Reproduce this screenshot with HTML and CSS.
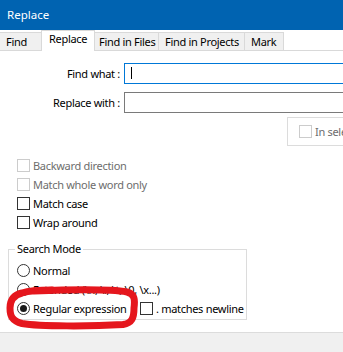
FILE: index.html
```html
<!DOCTYPE html>
<html lang="en">
<head>
  <meta charset="UTF-8" />
  <meta name="viewport" content="width=device-width, initial-scale=1.0"/>
  <title>Replace</title>
  <link rel="stylesheet" href="styles.css">
</head>
<body>

<div class="titlebar">Replace</div>

<div class="tabs">
  <div class="tab tab-find">Find</div>
  <div class="tab tab-replace active">Replace</div>
  <div class="tab tab-files">Find in Files</div>
  <div class="tab tab-projects">Find in Projects</div>
  <div class="tab tab-mark">Mark</div>
</div>

<div class="content">
  <div class="field-row first">
    <label>Find what :</label>
    <div class="field focused"><span class="caret"></span></div>
  </div>
  <div class="field-row">
    <label>Replace with :</label>
    <div class="field"></div>
  </div>

  <div class="selection-box">
    <div class="check disabled"><span class="box"></span>In selection</div>
  </div>

  <div class="options">
    <div class="check disabled"><span class="box"></span>Backward direction</div>
    <div class="check disabled"><span class="box"></span>Match whole word only</div>
    <div class="check"><span class="box"></span>Match case</div>
    <div class="check"><span class="box"></span>Wrap around</div>
  </div>

  <fieldset class="search-mode">
    <legend>Search Mode</legend>
    <div class="radios">
      <div class="radio"><span class="dot"></span>Normal</div>
      <div class="radio"><span class="dot"></span>Extended (\n, \r, \t, \0, \x...)</div>
      <div class="radio-row">
        <div class="radio checked"><span class="dot"></span>Regular expression</div>
        <div class="check"><span class="box"></span>. matches newline</div>
      </div>
    </div>
  </fieldset>
</div>

<div class="footer"></div>

<!-- red marker scribble drawn over the dialog -->
<svg class="scribble" width="343" height="352" viewBox="0 0 343 352">
  <path d="M 34 291 C 60 290, 110 289, 127 292 C 135 294, 135 300, 134 308 C 134 318, 132 323, 123 324.5 C 90 326.5, 40 326.5, 22 323.5 C 12 321, 10 316, 10 308 C 10 300, 14 295, 22 293 C 28 291, 40 290, 52 290"
        fill="none" stroke="#e5161d" stroke-width="7" stroke-linecap="round" stroke-linejoin="round"/>
</svg>

</body>
</html>
```

FILE: styles.css
```css
* {
  box-sizing: border-box;
}

body {
  margin: 0;
  width: 343px;
  height: 352px;
  overflow: hidden;
  position: relative;
  display: flex;
  flex-direction: column;
  background: #fff;
  font-family: "Noto Sans", "Open Sans", sans-serif;
  font-size: 11px;
  letter-spacing: -0.3px;
  color: #000;
}

.titlebar {
  height: 30px;
  line-height: 30px;
  padding-left: 7px;
  font-size: 11.5px;
  letter-spacing: 0;
  background: #0063b1;
  color: #fff;
  flex-shrink: 0;
}

.tabs {
  display: flex;
  align-items: flex-end;
  height: 21px;
  border-bottom: 1px solid #d9d9d9;
  flex-shrink: 0;
}

.tab {
  height: 18px;
  line-height: 17px;
  padding-left: 6px;
  background: #f0f0f0;
  border-top: 1px solid #d9d9d9;
  border-right: 1px solid #d9d9d9;
  white-space: nowrap;
}

.tab.active {
  height: 21px;
  margin-bottom: -1px;
  line-height: 15px;
  padding-left: 7px;
  background: #fff;
  border-left: 1px solid #d9d9d9;
}

.tab-find { width: 41px; border-right: none; }
.tab-replace { width: 54px; }
.tab-files { width: 64px; padding-left: 4px; }
.tab-projects { width: 86px; }
.tab-mark { width: 39px; }

.content {
  flex: 1;
  display: flex;
  flex-direction: column;
}

.field-row {
  display: flex;
  align-items: center;
  gap: 4px;
  margin-top: 8px;
}

.field-row.first {
  margin-top: 12px;
}

.field-row label {
  width: 120px;
  flex-shrink: 0;
  text-align: right;
  white-space: nowrap;
}

.field {
  width: 219px;
  height: 21px;
  flex-shrink: 0;
  border: 1px solid #7a7a7a;
  border-right: none;
  padding: 3px 0 0 6px;
}

.field.focused {
  border-color: #0078d7;
}

.caret {
  display: block;
  width: 1px;
  height: 12px;
  background: #000;
}

.selection-box {
  margin: 4px 0 0 287px;
  width: 56px;
  height: 29px;
  overflow: hidden;
  border: 1px solid #dcdcdc;
  border-right: none;
  padding: 7px 0 0 11px;
}

.options {
  display: flex;
  flex-direction: column;
  gap: 6px;
  margin-top: 13px;
  padding-left: 17px;
}

.check,
.radio {
  display: flex;
  align-items: center;
  gap: 3px;
  height: 13px;
  white-space: nowrap;
}

.box {
  width: 13px;
  height: 13px;
  flex-shrink: 0;
  border: 1px solid #333;
  background: #fff;
}

.check.disabled {
  color: #6d6d6d;
}

.check.disabled .box {
  border-color: #cccccc;
}

.search-mode {
  margin: 13px 0 0 8px;
  width: 239px;
  border: 1px solid #dcdcdc;
  padding: 0 0 4px 6px;
}

.search-mode legend {
  padding: 0 2px;
  line-height: 14px;
}

.radios {
  display: flex;
  flex-direction: column;
  gap: 6px;
  margin: 8px 0 0 2px;
}

.dot {
  width: 13px;
  height: 13px;
  flex-shrink: 0;
  border: 1px solid #333;
  border-radius: 50%;
  background: #fff;
  display: flex;
  align-items: center;
  justify-content: center;
}

.radio.checked .dot::after {
  content: "";
  width: 7px;
  height: 7px;
  border-radius: 50%;
  background: #1a1a1a;
}

.radio-row {
  display: grid;
  grid-template-columns: 123px auto;
}

.footer {
  height: 20px;
  flex-shrink: 0;
  background: #f0f0f0;
  border-top: 1px solid #dcdcdc;
}

.scribble {
  position: absolute;
  left: 0;
  top: 0;
  pointer-events: none;
}
```
